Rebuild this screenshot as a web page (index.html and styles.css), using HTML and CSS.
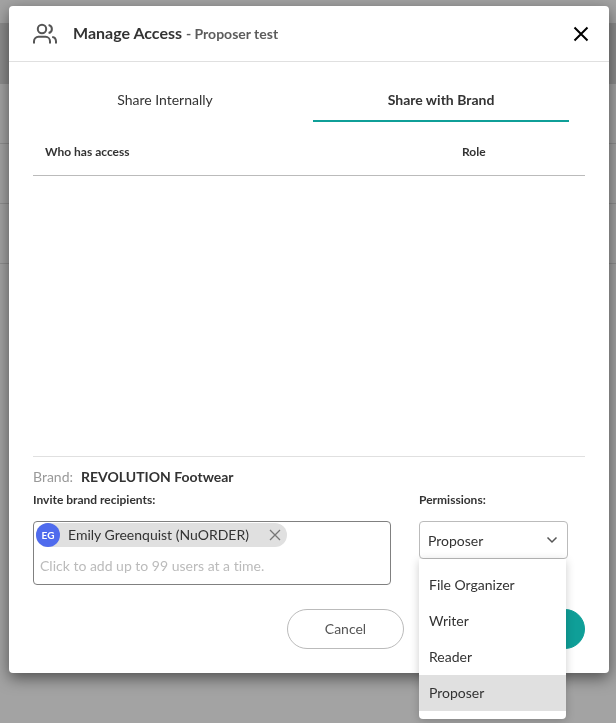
FILE: index.html
```html
<!DOCTYPE html>
<html lang="en">
<head>
  <meta charset="UTF-8">
  <meta name="viewport" content="width=device-width, initial-scale=1.0">
  <title>Manage Access</title>
  <link rel="stylesheet" href="styles.css">
</head>
<body>

  <!-- Dimmed page behind the dialog -->
  <div class="backdrop" aria-hidden="true">
    <div class="backdrop-head"></div>
    <div class="backdrop-row"></div>
    <div class="backdrop-row"></div>
    <div class="backdrop-row"></div>
  </div>

  <div class="modal" role="dialog" aria-labelledby="modalTitle">
    <header class="modal-header">
      <svg class="icon-users" viewBox="0 0 24 24" aria-hidden="true">
        <circle cx="9" cy="7" r="4.2"/>
        <path d="M1 21.6v-2.4a4.4 4.4 0 0 1 4.4-4.4h7.2a4.4 4.4 0 0 1 4.4 4.4v2.4"/>
        <path d="M15.6 2.9a4.2 4.2 0 0 1 0 8.2"/>
        <path d="M19.2 15a4.4 4.4 0 0 1 3.8 4.2v2.4"/>
      </svg>
      <h1 class="modal-title" id="modalTitle">Manage Access <span class="modal-subtitle">- Proposer test</span></h1>
      <button type="button" class="close-btn" aria-label="Close">
        <svg viewBox="0 0 16 16"><path d="M1.5 1.5l13 13M14.5 1.5l-13 13"/></svg>
      </button>
    </header>

    <div class="modal-body">
      <div class="tabs" role="tablist">
        <button type="button" class="tab" role="tab" aria-selected="false">Share Internally</button>
        <button type="button" class="tab active" role="tab" aria-selected="true">Share with Brand</button>
      </div>

      <div class="access-list">
        <table class="access-table">
          <thead>
            <tr>
              <th>Who has access</th>
              <th class="role-col">Role</th>
            </tr>
          </thead>
        </table>
      </div>

      <form class="invite">
        <p class="brand"><span class="brand-label">Brand:</span> <strong class="brand-name">REVOLUTION Footwear</strong></p>

        <div class="fields">
          <div class="field recipients">
            <label for="recipients">Invite brand recipients:</label>
            <div class="recipients-box">
              <div class="chip">
                <span class="avatar">EG</span>
                <span class="chip-name">Emily Greenquist (NuORDER)</span>
                <button type="button" class="chip-remove" aria-label="Remove">
                  <svg viewBox="0 0 12 12"><path d="M1 1l10 10M11 1L1 11"/></svg>
                </button>
              </div>
              <input type="text" id="recipients" placeholder="Click to add up to 99 users at a time.">
            </div>
          </div>

          <div class="field permissions">
            <label for="permissions">Permissions:</label>
            <div class="select-wrap">
              <select id="permissions">
                <option>File Organizer</option>
                <option>Writer</option>
                <option>Reader</option>
                <option selected>Proposer</option>
              </select>
              <svg class="chevron" viewBox="0 0 12 8" aria-hidden="true"><path d="M1.5 1.5L6 6l4.5-4.5"/></svg>
              <ul class="menu" role="listbox" aria-label="Permissions">
                <li role="option">File Organizer</li>
                <li role="option">Writer</li>
                <li role="option">Reader</li>
                <li role="option" class="selected" aria-selected="true">Proposer</li>
              </ul>
            </div>
          </div>
        </div>

        <div class="actions">
          <button type="button" class="btn">Cancel</button>
          <button type="submit" class="btn btn-primary" aria-label="Invite"></button>
        </div>
      </form>
    </div>
  </div>

</body>
</html>
```

FILE: styles.css
```css
/* General Styles */
* {
  box-sizing: border-box;
}

body {
  margin: 0;
  min-height: 100vh;
  padding: 6px 7px 50px 9px;
  background-color: #a3a3a3;
  color: #333;
  font-family: Lato, sans-serif;
  font-size: 14px;
  font-variant-ligatures: none;
  line-height: 20px;
}

button, input, select {
  font: inherit;
  font-variant-ligatures: none;
  color: inherit;
}

button {
  padding: 0;
  border: none;
  background: none;
  cursor: pointer;
}

svg {
  display: block;
  fill: none;
  stroke: currentColor;
}

/* Backdrop */
.backdrop {
  position: fixed;
  top: 0;
  left: 0;
  width: 100%;
  padding-top: 23px;
}

.backdrop-head {
  height: 61px;
  background-color: #8c8c8c;
}

.backdrop-row {
  height: 60px;
  border-bottom: 1px solid #8e8e8e;
}

/* Modal */
.modal {
  position: relative;
  background-color: #fff;
  border-radius: 4px;
  box-shadow: 0 5px 15px rgba(0, 0, 0, 0.5);
}

.modal-header {
  display: flex;
  align-items: center;
  height: 56px;
  padding: 0 20px 0 24px;
  border-bottom: 1px solid #e0e0e0;
}

.icon-users {
  width: 24px;
  height: 24px;
  color: #555;
  stroke-width: 2;
}

.modal-title {
  flex: 1;
  margin: 0 0 0 16px;
  font-size: 16px;
  font-weight: 700;
}

.modal-subtitle {
  color: #5c5c5c;
  font-size: 14px;
}

.close-btn svg {
  width: 16px;
  height: 16px;
  color: #000;
  stroke-width: 2;
}

.modal-body {
  padding: 16px 24px 24px;
}

/* Tabs */
.tabs {
  display: flex;
  gap: 20px;
  padding: 0 16px 0 4px;
}

.tab {
  flex: 1;
  height: 44px;
  padding-top: 2px;
  border-bottom: 2px solid transparent;
}

.tab.active {
  border-color: #0f9f98;
  font-weight: 700;
}

/* Access list */
.access-list {
  height: 334px;
}

.access-table {
  width: 100%;
  border-collapse: collapse;
}

.access-table th {
  height: 53px;
  padding: 8px 12px 0;
  border-bottom: 1px solid #bbb;
  font-size: 12px;
  font-weight: 700;
  text-align: left;
}

.access-table .role-col {
  width: 135px;
}

/* Invite form */
.invite {
  border-top: 1px solid #e0e0e0;
  padding-top: 10px;
}

.brand {
  display: flex;
  gap: 8px;
  margin: 0;
}

.brand-label {
  color: #999;
}

.fields {
  display: flex;
  justify-content: space-between;
  gap: 28px;
  padding-right: 17px;
}

.field label {
  display: block;
  margin: 3px 0 11px;
  font-size: 12px;
  font-weight: 700;
}

.recipients {
  flex: 1;
}

.recipients-box {
  height: 64px;
  padding: 1px 2px;
  border: 1px solid #808080;
  border-radius: 4px;
}

.chip {
  display: inline-flex;
  align-items: center;
  gap: 8px;
  height: 24px;
  padding-right: 6px;
  border-radius: 12px;
  background-color: #e0e0e0;
  vertical-align: top;
}

.avatar {
  width: 24px;
  height: 24px;
  border-radius: 50%;
  background-color: #4f6bed;
  color: #fff;
  font-size: 10px;
  font-weight: 700;
  line-height: 24px;
  text-align: center;
}

.chip-remove {
  margin-left: 12px;
}

.chip-remove svg {
  width: 12px;
  height: 12px;
  color: #777;
  stroke-width: 1.3;
}

.recipients-box input {
  display: block;
  width: 100%;
  height: 36px;
  padding: 0 4px;
  border: none;
  outline: none;
  background: none;
}

.recipients-box input::placeholder {
  color: #bbb;
}

.permissions {
  width: 149px;
}

.select-wrap {
  position: relative;
}

.select-wrap select {
  display: block;
  width: 100%;
  height: 38px;
  padding: 2px 32px 0 8px;
  border: 1px solid #bbb;
  border-radius: 4px;
  background: #fff;
  appearance: none;
}

.chevron {
  position: absolute;
  top: 15px;
  right: 10px;
  width: 12px;
  height: 8px;
  color: #555;
  stroke-width: 1.5;
}

/* Open permissions menu */
.menu {
  position: absolute;
  top: 38px;
  left: 0;
  right: 2px;
  z-index: 10;
  margin: 0;
  padding: 8px 0;
  border-radius: 0 0 4px 4px;
  background-color: #fff;
  box-shadow: 0 2px 10px rgba(0, 0, 0, 0.2);
  list-style: none;
}

.menu li {
  padding: 8px 10px;
  cursor: pointer;
}

.menu .selected {
  background-color: #e0e0e0;
}

/* Buttons */
.actions {
  display: flex;
  justify-content: flex-end;
  gap: 16px;
  margin-top: 24px;
}

.btn {
  width: 117px;
  height: 40px;
  border: 1px solid #bbb;
  border-radius: 20px;
  color: #555;
}

.btn-primary {
  width: 165px;
  border-color: #0f9f98;
  background-color: #0f9f98;
  color: #fff;
}
```
